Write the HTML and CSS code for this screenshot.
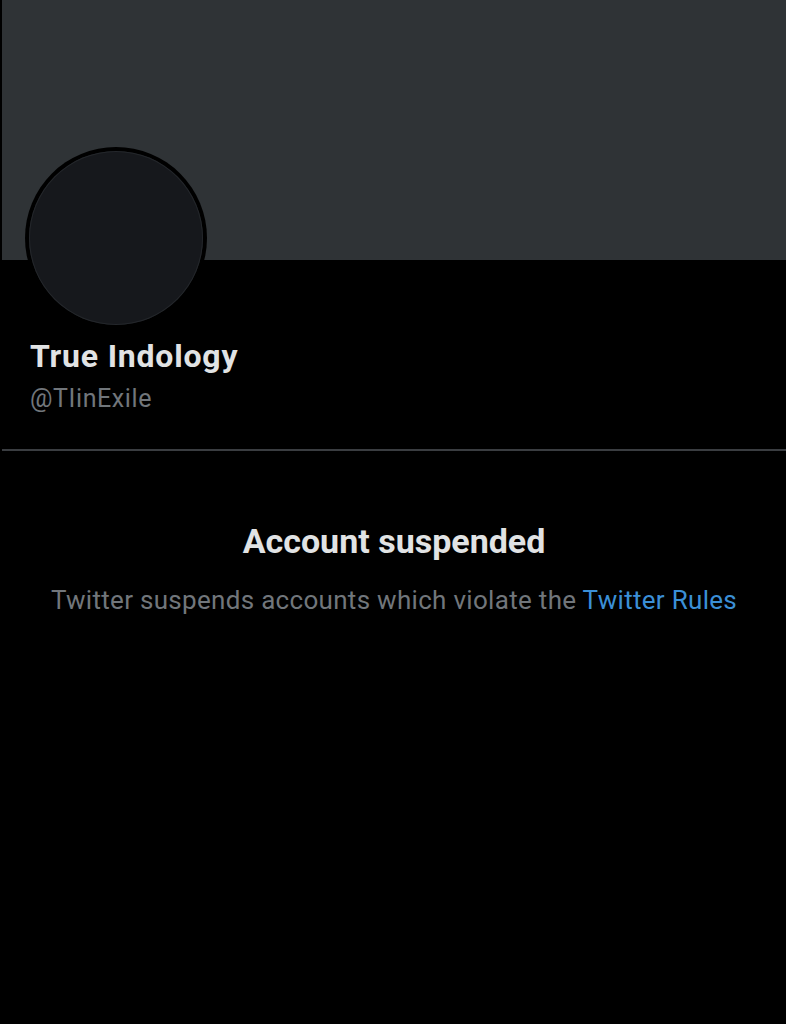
FILE: index.html
```html
<!DOCTYPE html>
<html>
<head>
<meta charset="utf-8">
<link rel="stylesheet" href="styles.css">
</head>
<body>
<div class="page">
  <div class="banner"></div>
  <div class="profile">
    <div class="avatar"><div class="avatar-inner"></div></div>
    <div class="name">True Indology</div>
    <div class="handle">@TIinExile</div>
  </div>
  <div class="divider"></div>
  <div class="notice">
    <div class="title">Account suspended</div>
    <div class="desc">Twitter suspends accounts which violate the <span class="link">Twitter Rules</span></div>
  </div>
</div>
</body>
</html>
```

FILE: styles.css
```css
html, body {
  margin: 0;
  padding: 0;
  background: #000;
}
body {
  font-family: Roboto, "Noto Sans", sans-serif;
}
.page {
  width: 786px;
  height: 1024px;
  padding-left: 2px;
  box-sizing: border-box;
  background: #000;
  overflow: hidden;
}
.banner {
  height: 260px;
  background: #2f3336;
}
.profile {
  padding-left: 28px;
  display: flex;
  flex-direction: column;
}
.avatar {
  width: 182px;
  height: 182px;
  margin-top: -113px;
  margin-left: -5px;
  border-radius: 50%;
  background: #000;
  display: flex;
  align-items: center;
  justify-content: center;
}
.avatar-inner {
  width: 174px;
  height: 174px;
  border-radius: 50%;
  background: #16181c;
  box-shadow: inset 0 0 0 1px #24272b;
}
.name {
  margin-top: 9px;
  font-size: 32px;
  font-weight: 700;
  letter-spacing: 0.8px;
  line-height: 36px;
  color: #e1e3e4;
}
.handle {
  margin-top: 10px;
  font-size: 25px;
  letter-spacing: 0.6px;
  line-height: 30px;
  color: #71767b;
}
.divider {
  margin-top: 35px;
  height: 2px;
  background: #3a3d41;
}
.notice {
  padding-top: 70px;
  text-align: center;
}
.title {
  font-size: 34px;
  font-weight: 700;
  line-height: 40px;
  color: #e1e3e4;
}
.desc {
  margin-top: 23px;
  font-size: 26px;
  letter-spacing: 0.3px;
  line-height: 32px;
  color: #71767b;
}
.link {
  color: #3b8fd6;
}
```
